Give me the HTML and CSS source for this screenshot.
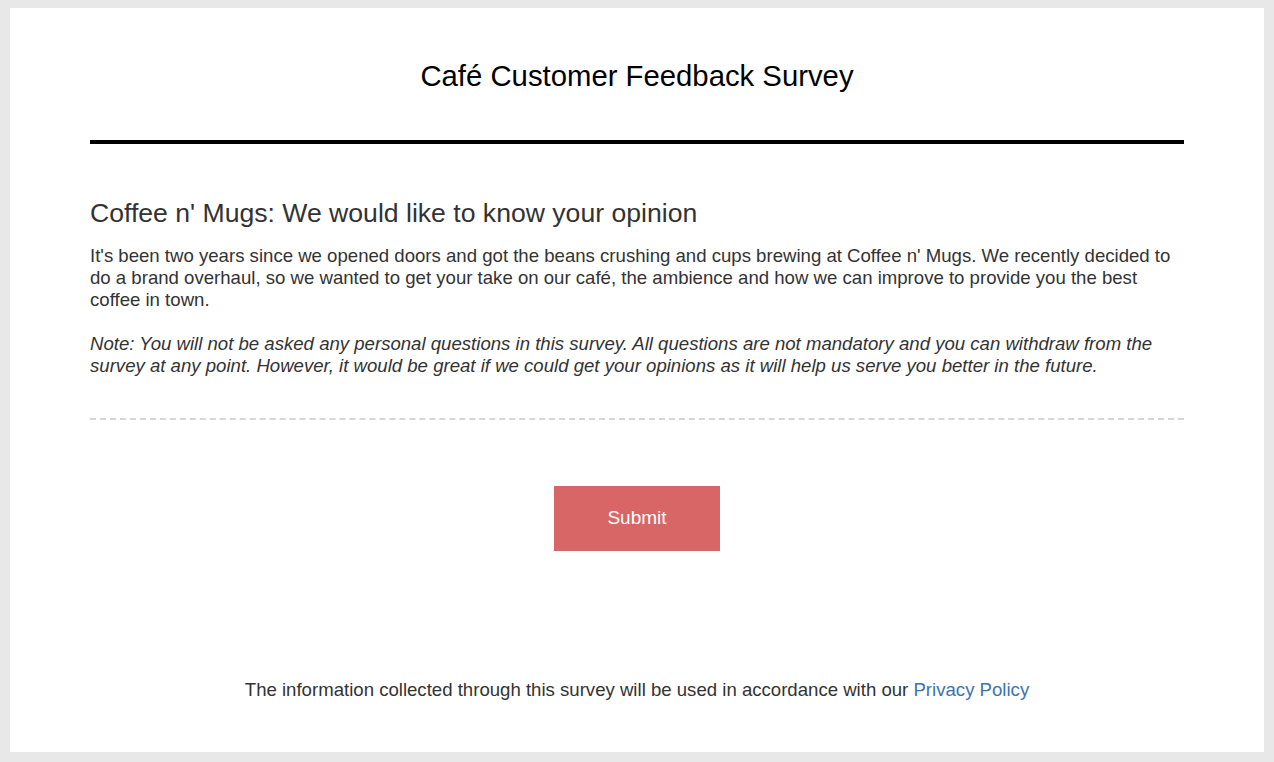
FILE: index.html
```html
<!DOCTYPE html>
<html lang="en">
<head>
<meta charset="utf-8">
<title>Café Customer Feedback Survey</title>
<link rel="stylesheet" href="styles.css">
</head>
<body>
<main class="card">
  <header class="survey-header">
    <h1 class="survey-title">Café Customer Feedback Survey</h1>
  </header>
  <section class="intro">
    <h2 class="intro-title">Coffee n' Mugs: We would like to know your opinion</h2>
    <p class="intro-text">It's been two years since we opened doors and got the beans crushing and cups brewing at Coffee n' Mugs. We recently decided to do a brand overhaul, so we wanted to get your take on our café, the ambience and how we can improve to provide you the best coffee in town.</p>
    <p class="intro-note">Note: You will not be asked any personal questions in this survey. All questions are not mandatory and you can withdraw from the survey at any point. However, it would be great if we could get your opinions as it will help us serve you better in the future.</p>
  </section>
  <div class="actions">
    <button class="submit-btn" type="button">Submit</button>
  </div>
  <footer class="survey-footer">
    The information collected through this survey will be used in accordance with our <a class="policy-link" href="#">Privacy Policy</a>
  </footer>
</main>
</body>
</html>
```
FILE: styles.css
```css
html, body {
  margin: 0;
  padding: 0;
}
body {
  background: #e8e8e8;
  padding: 8px 10px 10px 10px;
  font-family: "Liberation Sans", Arial, sans-serif;
  color: #333333;
}
.card {
  background: #ffffff;
  padding: 52px 80px 51px 80px;
  min-height: 744px;
  box-sizing: border-box;
}
.survey-header {
  border-bottom: 4px solid #000000;
  padding-bottom: 48px;
}
.survey-title {
  margin: 0;
  font-size: 29.3px;
  line-height: 32px;
  font-weight: normal;
  color: #000000;
  text-align: center;
}
.intro {
  padding-top: 54px;
  padding-bottom: 41px;
  border-bottom: 2px dashed #d6d6d6;
}
.intro-title {
  margin: 0 0 17px 0;
  font-size: 26.6px;
  line-height: 30px;
  font-weight: normal;
  color: #333333;
}
.intro-text {
  margin: 0 0 22px 0;
  font-size: 18.6px;
  line-height: 22px;
}
.intro-note {
  margin: 0;
  font-size: 18.6px;
  line-height: 22px;
  font-style: italic;
}
.actions {
  display: flex;
  justify-content: center;
  padding-top: 66px;
}
.submit-btn {
  width: 166px;
  height: 65px;
  padding: 0 0 2px 0;
  border: none;
  background: #d96666;
  color: #ffffff;
  font-family: "Liberation Sans", Arial, sans-serif;
  font-size: 19px;
  cursor: pointer;
}
.survey-footer {
  margin-top: 128px;
  text-align: center;
  font-size: 18.6px;
  line-height: 22px;
  color: #333333;
}
.policy-link {
  color: #3d73b0;
  text-decoration: none;
}
```
